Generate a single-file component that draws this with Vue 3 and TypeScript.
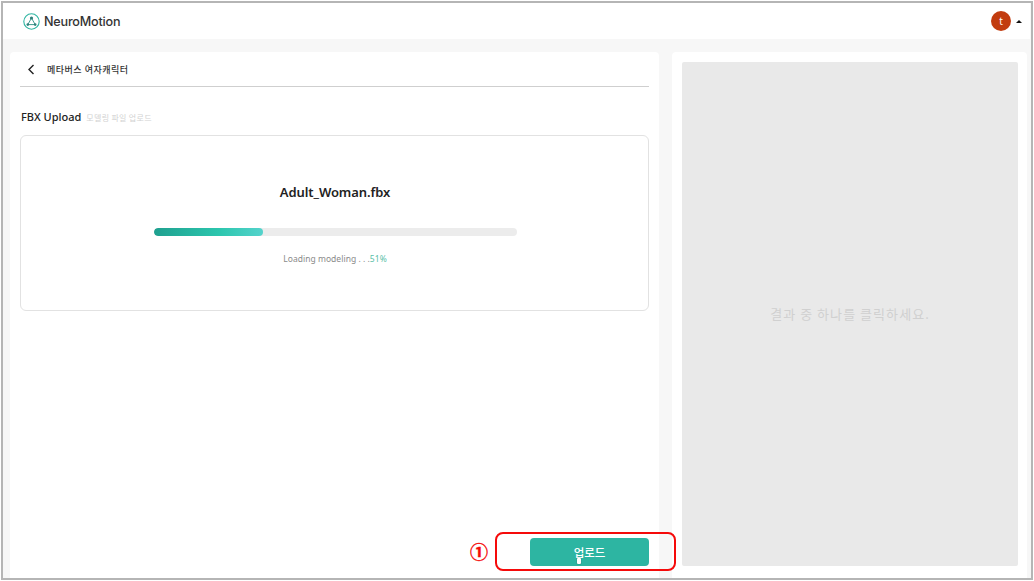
<script setup lang="ts">
const progress = 30.3
</script>

<template>
  <div class="shot">
    <header class="topbar">
      <div class="brand">
        <svg class="logo" width="17" height="17" viewBox="0 0 17 17" fill="none">
          <circle cx="8.5" cy="8.5" r="7.7" stroke="#2fb5a2" stroke-width="1.1" />
          <path d="M8.5 5 4.8 11.6h7.4z" stroke="#3f9a90" stroke-width="1" />
          <circle cx="8.5" cy="5" r="1.6" fill="#2f7f7a" />
          <circle cx="4.8" cy="11.6" r="1.3" fill="#2f7f7a" />
          <circle cx="12.2" cy="11.6" r="1.3" fill="#2f7f7a" />
        </svg>
        <span class="brand-name">NeuroMotion</span>
      </div>
      <div class="user">
        <span class="avatar">t</span>
        <span class="caret"></span>
      </div>
    </header>
    <main class="body">
      <section class="left">
        <div class="title-row">
          <svg width="8" height="11" viewBox="0 0 8 11" fill="none">
            <path d="M6.5 1 2 5.5 6.5 10" stroke="#222" stroke-width="1.4" />
          </svg>
          <span class="title">메타버스 여자캐릭터</span>
        </div>
        <div class="section-head">
          <span class="section-title">FBX Upload</span>
          <span class="section-sub">모델링 파일 업로드</span>
        </div>
        <div class="card">
          <div class="file-name">Adult_Woman.fbx</div>
          <div class="track">
            <div class="fill" :style="{ width: progress + '%' }"></div>
          </div>
          <div class="status">Loading modeling . . .<em>51%</em></div>
        </div>
        <div class="actions">
          <button class="upload">업로드</button>
        </div>
      </section>
      <aside class="right">
        <div class="preview">결과 중 하나를 클릭하세요.</div>
      </aside>
    </main>
    <div class="callout"></div>
    <span class="callout-num">①</span>
    <span class="cursor"></span>
  </div>
</template>

<style>
html, body { margin: 0; background: #fff; }
</style>

<style scoped>
.shot {
  position: relative;
  box-sizing: border-box;
  width: 1034px;
  height: 581px;
  border: 1px solid #fff;
  overflow: hidden;
  font-family: "Noto Sans CJK KR", "Noto Sans", sans-serif;
  background: #f7f7f7;
  display: flex;
  flex-direction: column;
  outline: 2px solid #b5b5b5;
  outline-offset: -3px;
  padding: 2px 3px 2px 2px;
}
.topbar {
  height: 36px;
  flex: none;
  background: #fff;
  display: flex;
  align-items: center;
  justify-content: space-between;
  padding: 0 8px 0 20px;
}
.brand { display: flex; align-items: center; gap: 4px; }
.logo { display: block; }
.brand-name {
  font-family: "Inter", sans-serif;
  font-size: 12.6px;
  font-weight: 500;
  letter-spacing: -0.2px;
  color: #333;
}
.user { display: flex; align-items: center; gap: 5px; }
.avatar {
  width: 20px;
  height: 20px;
  border-radius: 50%;
  background: #c23c0f;
  color: #fff;
  font-size: 10px;
  line-height: 20px;
  text-align: center;
  font-family: "Noto Sans", sans-serif;
}
.caret {
  width: 0;
  height: 0;
  border-left: 3px solid transparent;
  border-right: 3px solid transparent;
  border-bottom: 3px solid #111;
}
.body {
  flex: 1;
  display: flex;
  gap: 13px;
  padding: 13px 3px 0 7px;
  min-height: 0;
}
.left {
  width: 649px;
  flex: none;
  background: #fff;
  border-radius: 4px 4px 0 0;
  box-sizing: border-box;
  padding: 0 10px 12px 10px;
  display: flex;
  flex-direction: column;
}
.title-row {
  height: 34px;
  display: flex;
  align-items: center;
  gap: 12px;
  padding-left: 7px;
  border-bottom: 1px solid #cfcfcf;
  flex: none;
}
.title { font-size: 9px; font-weight: 500; color: #333; letter-spacing: 0.5px; padding-top: 1px; }
.section-head {
  display: flex;
  align-items: baseline;
  gap: 5px;
  margin-top: 22px;
  height: 26px;
  flex: none;
  padding-left: 1px;
}
.section-title {
  font-family: "Noto Sans", sans-serif;
  font-size: 11px;
  font-weight: 500;
  color: #222;
}
.section-sub { font-size: 8px; color: #d2d2d2; letter-spacing: 0.3px; }
.card {
  height: 176px;
  flex: none;
  box-sizing: border-box;
  border: 1px solid #e2e2e2;
  border-radius: 6px;
  display: flex;
  flex-direction: column;
  align-items: center;
  padding: 47px 0 0 1px;
}
.file-name {
  font-family: "Noto Sans", sans-serif;
  font-size: 13px;
  font-weight: 600;
  letter-spacing: -0.08px;
  color: #222;
  line-height: 18px;
}
.track {
  width: 363px;
  height: 8px;
  margin-top: 27px;
  border-radius: 4px;
  background: #ececec;
  overflow: hidden;
}
.fill {
  height: 100%;
  border-radius: 4px;
  background: linear-gradient(90deg, #1fa08f, #2cc6ae 60%, #55d3cc);
}
.status {
  margin-top: 17px;
  font-family: "Noto Sans", sans-serif;
  font-size: 8.5px;
  letter-spacing: 0.03px;
  line-height: 12px;
  color: #8a8a8a;
}
.status em { font-style: normal; color: #5bbfa8; }
.actions {
  margin-top: auto;
  display: flex;
  justify-content: flex-end;
}
.upload {
  width: 119px;
  height: 28px;
  border: 0;
  border-radius: 4px;
  background: #2db5a2;
  color: #fff;
  font-family: "Noto Sans CJK KR", sans-serif;
  font-size: 11.5px;
  font-weight: 500;
  padding: 0;
}
.right {
  flex: 1;
  min-width: 0;
  background: #fff;
  border-radius: 4px 4px 0 0;
  padding: 10px 9px 12px 10px;
  display: flex;
}
.preview {
  flex: 1;
  background: #e9e9e9;
  border-radius: 2px;
  display: flex;
  align-items: center;
  justify-content: center;
  color: #d0d0d0;
  font-size: 13px;
  letter-spacing: 1.05px;
  padding-bottom: 2px;
  box-sizing: border-box;
}
.callout {
  position: absolute;
  left: 494px;
  top: 531px;
  width: 177px;
  height: 35px;
  border: 2px solid #f50a0a;
  border-radius: 8px;
}
.callout-num {
  position: absolute;
  left: 469px;
  top: 539px;
  font-size: 18px;
  line-height: 22px;
  font-weight: 700;
  color: #f50a0a;
  -webkit-text-stroke: 0.4px #f50a0a;
}
.cursor {
  position: absolute;
  left: 576px;
  top: 557px;
  width: 4px;
  height: 6px;
  border-radius: 1px;
  background: #fff;
  box-shadow: 0 0 1px #333;
}
</style>
